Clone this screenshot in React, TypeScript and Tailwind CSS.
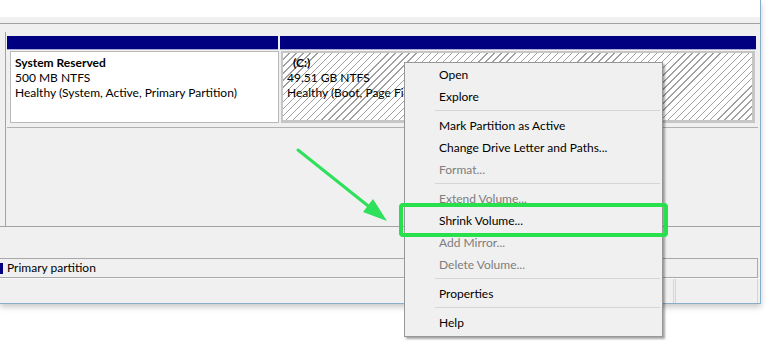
import { Fragment } from 'react';

type MenuEntry = { label: string; disabled?: boolean } | 'sep';

const menuItems: MenuEntry[] = [
  { label: 'Open' },
  { label: 'Explore' },
  'sep',
  { label: 'Mark Partition as Active' },
  { label: 'Change Drive Letter and Paths...' },
  { label: 'Format...', disabled: true },
  'sep',
  { label: 'Extend Volume...', disabled: true },
  { label: 'Shrink Volume...' },
  { label: 'Add Mirror...', disabled: true },
  { label: 'Delete Volume...', disabled: true },
  'sep',
  { label: 'Properties' },
  'sep',
  { label: 'Help' },
];

export default function App() {
  return (
    <div className="relative w-[767px] h-[362px] overflow-hidden bg-white font-['Lato',sans-serif] text-[12px] leading-[15px] text-black">
      {/* Disk management window */}
      <div className="w-[761px] h-[304px] flex flex-col bg-[#f0f0f0] border-r border-b border-[#88adc9] shadow-[0_3px_6px_rgba(0,0,0,0.22)]">
        <div className="h-[17px] bg-white" />
        <div className="h-[6px]" />
        <div className="h-px bg-[#a3a3a3]" />

        {/* Disk pane */}
        <div className="flex h-[203px] border-b border-[#a3a3a3]">
          <div className="w-[6px] mt-[8px] border-r border-[#a3a3a3]" />
          <div className="flex-1 pt-[12px] pl-px">
            <div className="flex">
              <div className="w-[273px]">
                <div className="w-[271px] h-[14px] bg-[#000080] border-b border-[#a9a9d8]" />
                <div className="ml-[3px] mt-px w-[269px] h-[72px] bg-white border border-[#b9b9b9] px-[4px] pt-[3px]">
                  <div className="font-bold">System Reserved</div>
                  <div>500 MB NTFS</div>
                  <div>Healthy (System, Active, Primary Partition)</div>
                </div>
              </div>
              <div className="w-[476px]">
                <div className="h-[14px] bg-[#000080] border-b border-[#a9a9d8]" />
                <div className="ml-px mt-px w-[474px] h-[72px] border-2 border-r-[3px] border-b-[3px] border-[#c6c6c6] bg-white bg-[repeating-linear-gradient(135deg,#ffffff_0px,#ffffff_4px,#a0a0a0_4px,#a0a0a0_5px)] px-[4px] pt-[2px]">
                  <div className="w-[117px] overflow-hidden whitespace-nowrap">
                    <div className="font-bold pl-[6px]">(C:)</div>
                    <div>49.51 GB NTFS</div>
                    <div>Healthy (Boot, Page File, Crash Dump, Primary Partition)</div>
                  </div>
                </div>
              </div>
            </div>
            <div className="mt-[4px] w-[751px] h-px bg-[#b0b0b0]" />
          </div>
        </div>

        <div className="h-[31px]" />

        {/* Legend */}
        <div className="w-[758px] h-[20px] flex items-center border-y border-r border-[#a8a8a8]">
          <div className="w-[3px] h-[11px] bg-[#000080]" />
          <span className="ml-[4px] -mt-px">Primary partition</span>
        </div>

        {/* Status bar */}
        <div className="flex-1 flex border-t border-[#fafafa]">
          <div className="w-[673px]" />
          <div className="w-[3px] border-x border-[#d4d4d4]" />
          <div className="flex-1 border-r border-[#d4d4d4] mr-[2px]" />
        </div>
      </div>

      {/* Arrow */}
      <svg className="absolute left-0 top-0" width="767" height="362">
        <line x1="298" y1="150" x2="372" y2="209" stroke="#2ee05a" strokeWidth="3" strokeLinecap="round" />
        <polygon points="387,221 373,199 363,212" fill="#2ee05a" />
      </svg>

      {/* Context menu */}
      <div className="absolute left-[404px] top-[62px] w-[259px] h-[275px] bg-[#f0f0f0] border border-[#979797] pb-[2px] shadow-[2px_2px_2px_rgba(0,0,0,0.35)]">
        {menuItems.map((item, i) =>
          item === 'sep' ? (
            <div key={i} className="h-[7px] flex items-center ml-[30px] mr-[2px]">
              <div className="w-full h-px bg-[#d5d5d5]" />
            </div>
          ) : (
            <Fragment key={i}>
              <div className={`h-[22px] flex items-center pl-[34px] ${item.disabled ? 'text-[#7d7d7d]' : 'text-black'}`}>
                {item.label}
              </div>
            </Fragment>
          )
        )}
      </div>

      {/* Highlight */}
      <div className="absolute left-[399px] top-[203px] w-[269px] h-[34px] border-4 border-[#27e04c] rounded-[4px]" />
    </div>
  );
}
